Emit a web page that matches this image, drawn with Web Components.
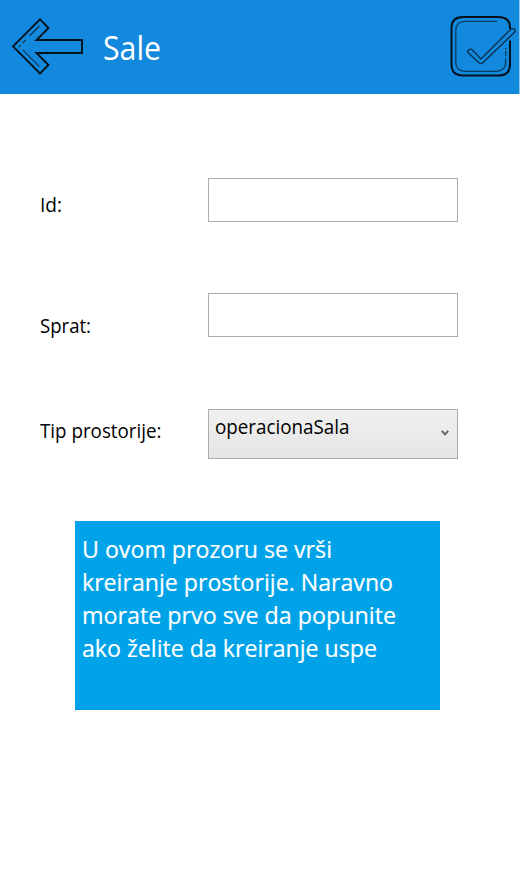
<!DOCTYPE html>
<html lang="sr-Latn">
<head>
<meta charset="utf-8">
<title>Sale</title>
<style>
html,body{margin:0;height:100%;background:#fff}
body{font-family:"Open Sans","Noto Sans",sans-serif;color:#000;overflow:hidden}
</style>
</head>
<body>
<room-page></room-page>
<script>
const define = (name, html, setup) => customElements.define(name, class extends HTMLElement {
  connectedCallback() {
    if (this.shadowRoot) return;
    const t = document.createElement('template');
    t.innerHTML = html;
    this.attachShadow({mode: 'open'}).append(t.content.cloneNode(true));
    if (setup) setup(this, this.shadowRoot);
  }
});

/* One line of text condensed or widened to a given width. */
define('fit-text', `<style>
:host{display:block;white-space:nowrap}
span{display:inline-block;transform-origin:0 50%}
</style><span><slot></slot></span>`, (el, root) => {
  const s = root.querySelector('span');
  s.style.transform = `scaleX(${el.getAttribute('width') / s.getBoundingClientRect().width})`;
});

define('back-icon', `<style>:host{display:block;width:74px;height:60px}svg{display:block}</style>
<svg width="74" height="60" viewBox="11 17 74 60" fill="none" stroke="#05121c" stroke-linejoin="miter">
<path stroke-width="1.9" d="M13 46.3 40 19.3 48.5 28 36.5 40H82V53H36.5L48.5 65 40 73.5Z"/>
<path stroke-width="1.1" stroke="#0a3355" d="M39.5 26 29.5 36M25.7 40 22.7 43M20.7 45 18.7 47M23 50.2 39.5 66.7"/>
</svg>`);

define('confirm-icon', `<style>:host{display:block;width:68px;height:64px}svg{display:block}</style>
<svg width="68" height="64" viewBox="449 14 68 64" fill="none" stroke="#05121c" stroke-linecap="butt" stroke-linejoin="round">
<path stroke-width="2" d="M510 29V28Q510 17 499 17H463Q451.5 17 451.5 28V64Q451.5 75.5 463 75.5H499Q510 75.5 510 64V40.5"/>
<path stroke-width="1.3" stroke="#093a60" d="M497 21.3H465Q455.8 21.3 455.8 31V62Q455.8 71.3 465 71.3H496Q505.7 71.3 505.7 62V58.5M505.7 56.5V51M505.7 49.5V48"/>
<path stroke-width="1.4" stroke="#08304f" d="M471.8 49.4Q469.8 48.6 468.4 50.3 467.3 52 468.7 53.3L479.3 63Q481 64.2 482.6 63L514.5 32.2Q515.8 30.5 514.3 29.1 512.6 27.8 511 29.1L481 59Z"/>
</svg>`);

define('app-bar', `<style>
:host{display:flex;box-sizing:border-box;width:520px;height:94px;background:#1389de;border-right:1px solid #8cc5ef;color:#fff;padding:0 2px 0 11px;align-items:center}
back-icon{margin-right:18px}
.title{flex:1;font-size:33px;line-height:46px;padding-top:2px}
confirm-icon{margin-bottom:2px}
</style><back-icon></back-icon><div class="title"><slot></slot></div><confirm-icon></confirm-icon>`);

define('text-field', `<style>
:host{display:block;box-sizing:border-box;width:250px;height:44px;border:1px solid #abadb3;background:#fff}
</style>`);

define('combo-box', `<style>
:host{display:flex;box-sizing:border-box;width:250px;height:50px;border:1px solid #acacac;background:linear-gradient(#f0f0f0,#e5e5e5);justify-content:space-between;padding:3px 8px 0 6px}
.v{font-size:19.5px;line-height:27px}
svg{margin-top:16px}
</style><div class="v"><slot></slot></div>
<svg width="8" height="8" viewBox="0 0 8 8" fill="none" stroke="#606060" stroke-width="1.8"><path d="M.8 1.8 4 5.4 7.2 1.8"/></svg>`);

define('form-row', `<style>
:host{display:grid;grid-template-columns:168px 250px;padding-left:40px}
.l{font-size:19.5px;line-height:27px;padding-top:var(--drop)}
</style><div class="l"><slot name="label"></slot></div><slot></slot>`);

define('info-note', `<style>
:host{display:block;box-sizing:border-box;width:365px;height:189px;background:#00a2e8;color:#fff;padding:11px 7px;font-size:24px;line-height:33px;-webkit-text-stroke:.2px #fff}
</style><slot></slot>`);

define('room-page', `<style>
:host{display:flex;flex-direction:column;width:520px;height:887px;background:#fff}
.form{display:flex;flex-direction:column;padding-top:84px}
.a{--drop:13px;height:115px}.b{--drop:19px;height:116px}.c{--drop:8px;height:112px}
info-note{margin-left:75px}
</style>
<app-bar><fit-text width="58">Sale</fit-text></app-bar>
<div class="form">
<form-row class="a"><fit-text slot="label" width="22">Id:</fit-text><text-field></text-field></form-row>
<form-row class="b"><fit-text slot="label" width="51">Sprat:</fit-text><text-field></text-field></form-row>
<form-row class="c"><fit-text slot="label" width="121.5">Tip prostorije:</fit-text><combo-box><fit-text width="134.5">operacionaSala</fit-text></combo-box></form-row>
</div>
<info-note>
<fit-text width="250">U ovom prozoru se vrši</fit-text>
<fit-text width="311">kreiranje prostorije. Naravno</fit-text>
<fit-text width="314">morate prvo sve da popunite</fit-text>
<fit-text width="295">ako želite da kreiranje uspe</fit-text>
</info-note>`);
</script>
</body>
</html>
